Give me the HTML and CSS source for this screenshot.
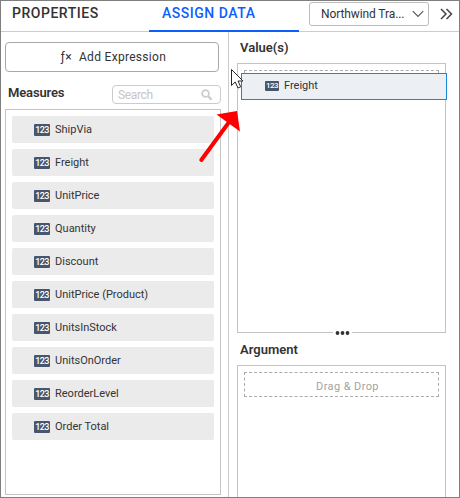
FILE: index.html
```html
<!DOCTYPE html>
<html lang="en">
<head>
<meta charset="utf-8">
<title>Assign Data</title>
<link rel="stylesheet" href="styles.css">
</head>
<body>
<div class="window">
  <header class="tabs">
    <div class="tab"><span class="tab-text">PROPERTIES</span></div>
    <div class="tab active"><span class="tab-text">ASSIGN DATA</span></div>
    <div class="source">
      <div class="select"><span>Northwind Tra...</span>
        <svg width="12" height="8" viewBox="0 0 12 8"><path d="M.8 1.2 6 6.4l5.2-5.2" fill="none" stroke="#555" stroke-width="1.1"/></svg>
      </div>
      <svg class="collapse" width="13" height="12" viewBox="0 0 13 12"><path d="M1 1l5 5-5 5M6.5 1l5 5-5 5" fill="none" stroke="#444" stroke-width="1.5"/></svg>
    </div>
  </header>
  <main class="body">
    <section class="left">
      <div class="add"><span class="fx">ƒ×</span><span>Add Expression</span></div>
      <div class="measure-head">
        <h2>Measures</h2>
        <div class="search"><span>Search</span>
          <svg width="12" height="12" viewBox="0 0 12 12"><circle cx="4.5" cy="4.5" r="3.4" fill="none" stroke="#ccc" stroke-width="1.7"/><path d="M7 7l3.5 3.7" stroke="#ccc" stroke-width="2.4"/></svg>
        </div>
      </div>
      <div class="list">
        <div class="item"><i class="num">123</i><span>ShipVia</span></div>
        <div class="item"><i class="num">123</i><span>Freight</span></div>
        <div class="item"><i class="num">123</i><span>UnitPrice</span></div>
        <div class="item"><i class="num">123</i><span>Quantity</span></div>
        <div class="item"><i class="num">123</i><span>Discount</span></div>
        <div class="item"><i class="num">123</i><span>UnitPrice (Product)</span></div>
        <div class="item"><i class="num">123</i><span>UnitsInStock</span></div>
        <div class="item"><i class="num">123</i><span>UnitsOnOrder</span></div>
        <div class="item"><i class="num">123</i><span>ReorderLevel</span></div>
        <div class="item"><i class="num">123</i><span>Order Total</span></div>
      </div>
    </section>
    <section class="right">
      <h2>Value(s)</h2>
      <div class="values">
        <div class="drop"></div>
        <div class="dragged"><i class="num small">123</i><span>Freight</span></div>
        <svg class="grip" width="19" height="6" viewBox="0 0 19 6"><path fill="#fff" d="M0 0h19v6H0z"/><g fill="#333"><circle cx="4.5" cy="3" r="1.9"/><circle cx="9.5" cy="3" r="1.9"/><circle cx="14.5" cy="3" r="1.9"/></g></svg>
      </div>
      <h2 class="arg-title">Argument</h2>
      <div class="argument"><div class="drop">Drag &amp; Drop</div></div>
    </section>
  </main>
  <svg class="pointer" width="52" height="100" viewBox="195 65 52 100">
    <path d="M201.3 160 228 123.5" stroke="red" stroke-width="4" stroke-linecap="round"/>
    <path d="M216.5 114.5 237 111l3 20.5z" fill="red"/>
    <path d="M231.5 69.5v16l3.7-3.5 2.8 6 2.7-1.2-2.7-5.8h5z" fill="#fff" stroke="#222831" stroke-width="1"/>
  </svg>
</div>
</body>
</html>
```
FILE: styles.css
```css
* { box-sizing: border-box; }
body { margin: 0; font: 12px/16px Roboto, sans-serif; color: #333; background: #fff; }
svg { display: block; flex: none; }
h2 { margin: 0; font-size: 13px; line-height: 16px; font-weight: 600; letter-spacing: 0; color: #333; }
.window { position: relative; width: 460px; height: 498px; border: 1px solid #7f7f7f; overflow: hidden; display: flex; flex-direction: column; }
.tabs { display: grid; grid-template-columns: 148px 150px 1fr; height: 31px; flex: none; }
.tab { border-bottom: 1px solid #ccc; padding: 4px 0 0 11px; font-size: 14px; font-weight: 500; letter-spacing: .52px; white-space: nowrap; }
.tab.active { color: #0d5ffb; border-bottom: 2px solid #0d5ffb; padding-left: 13px; }
.source { display: flex; align-items: flex-start; border-bottom: 1px solid #ccc; padding: 1px 0 0 10px; }
.select { width: 120px; height: 24px; border: 1px solid #bcbcbc; border-radius: 3px; display: flex; align-items: center; justify-content: space-between; padding: 0 4px 0 11px; letter-spacing: -.1px; white-space: nowrap; }
.collapse { margin: 6px 0 0 11px; }
.body { flex: 1; display: grid; grid-template-columns: 228px 1fr; min-height: 0; }
.left { border-right: 1px solid #ccc; padding: 10px 7px 2px 4px; display: flex; flex-direction: column; }
.add { height: 30px; width: 214px; border: 1px solid #a8a8a8; border-radius: 4px; display: flex; align-items: center; justify-content: center; gap: 7px; padding-left: 3px; letter-spacing: .3px; }
.measure-head { display: flex; justify-content: space-between; height: 37px; padding: 13px 0 0 3px; }
.measure-head h2 { letter-spacing: -.15px; }
.search { width: 109px; height: 19px; border: 1px solid #ccc; border-radius: 4px; display: flex; align-items: center; justify-content: space-between; padding: 0 7px 0 5px; color: #c6c6c6; letter-spacing: -.35px; }
.list { flex: 1; width: 216px; border: 1px solid #c4c4c4; padding: 6px; display: flex; flex-direction: column; gap: 6px; }
.item { height: 27px; flex: none; background: #ebebeb; border-radius: 2px; display: flex; align-items: center; padding-left: 22px; gap: 5px; font-size: 11px; }
.num { width: 16px; height: 12px; border-radius: 1px; background: #46566d; color: #fff; font: 500 9px/12px Roboto, sans-serif; text-align: center; letter-spacing: -.6px; flex: none; }
.right { padding: 8px 13px 0 8px; display: flex; flex-direction: column; }
.right h2 { padding-left: 3px; }
.values { position: relative; margin-top: 7px; height: 270px; border: 1px solid #c4c4c4; padding: 6px; flex: none; }
.drop { height: 25px; border: 1px dashed #aaa; text-align: center; font-size: 11px; line-height: 27px; color: #a3a3a3; letter-spacing: .4px; padding-left: 12px; }
.dragged { position: absolute; left: 3px; top: 9px; width: 206px; height: 27px; background: #ecf0f4; border: 1px solid #1787d8; display: flex; align-items: center; padding: 0 0 2px 23px; gap: 5px; font-size: 11px; }
.small { width: 14px; height: 10px; font-size: 8px; line-height: 10px; position: relative; top: .5px; }
.grip { position: absolute; left: 95px; bottom: -4px; }
.right .arg-title { margin-top: 9px; }
.argument { flex: 1; margin-top: 7px; border: 1px solid #c4c4c4; border-bottom: 0; padding: 6px; }
.pointer { position: absolute; left: 194px; top: 64px; }
```
